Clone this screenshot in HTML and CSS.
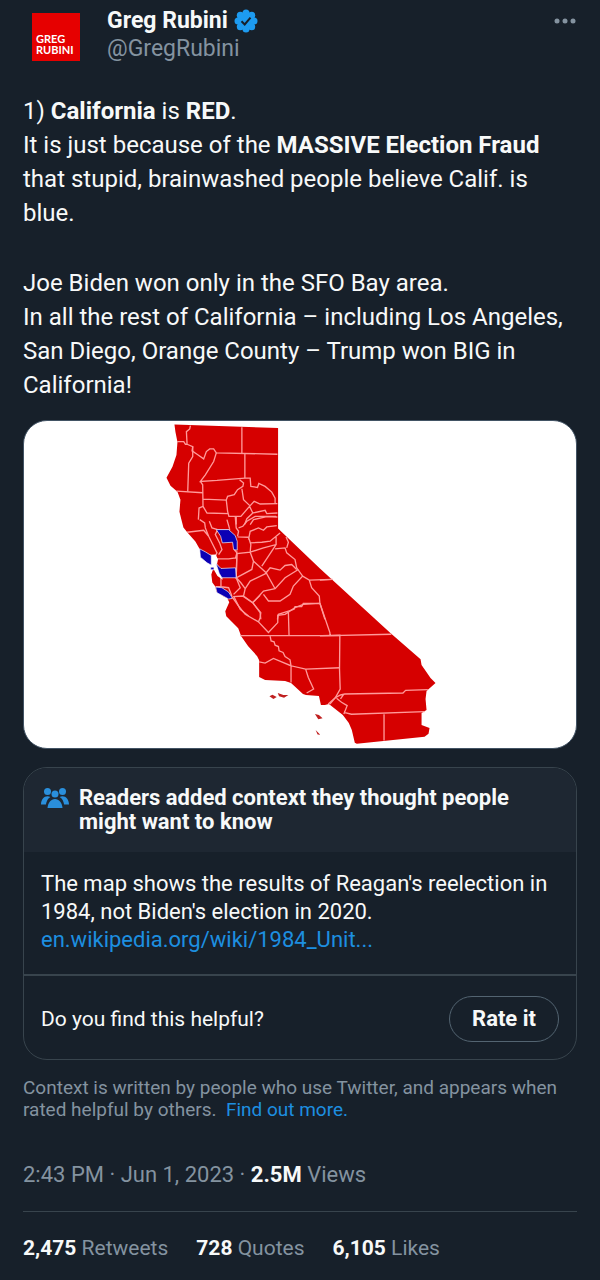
FILE: index.html
```html
<!DOCTYPE html>
<html lang="en">
<head>
  <meta charset="UTF-8">
  <meta name="viewport" content="width=device-width, initial-scale=1.0">
  <title>Greg Rubini on Twitter</title>
  <link rel="stylesheet" href="styles.css">
</head>
<body>

  <article class="tweet">
    <header class="author">
      <div class="avatar">GREG<br>RUBINI</div>
      <div class="names">
        <div class="name">
          Greg Rubini
          <svg class="verified" viewBox="0 0 24 24" aria-label="Verified">
            <g fill="#1d9bf0">
              <circle cx="12" cy="12" r="9"/>
              <circle cx="12" cy="4" r="3.5"/>
              <circle cx="17.700" cy="6.300" r="3.500"/>
              <circle cx="20" cy="12" r="3.500"/>
              <circle cx="17.700" cy="17.700" r="3.500"/>
              <circle cx="12" cy="20" r="3.500"/>
              <circle cx="6.300" cy="17.700" r="3.500"/>
              <circle cx="4" cy="12" r="3.500"/>
              <circle cx="6.300" cy="6.300" r="3.500"/>
            </g>
            <path d="M7.500 12.300l3.200 3.200 5.800-6.800" fill="none" stroke="#17202a" stroke-width="2"/>
          </svg>
        </div>
        <div class="handle">@GregRubini</div>
      </div>
      <button class="more" aria-label="More">
        <svg viewBox="0 0 24 8"><circle cx="4" cy="4" r="2.500"/><circle cx="12" cy="4" r="2.500"/><circle cx="20" cy="4" r="2.500"/></svg>
      </button>
    </header>

    <div class="text">
      <p>1) <b>California</b> is <b>RED</b>.<br>
      It is just because of the <b>MASSIVE Election Fraud</b><br>
      that stupid, brainwashed people believe Calif. is<br>
      blue.</p>
      <p>Joe Biden won only in the SFO Bay area.<br>
      In all the rest of California – including Los Angeles,<br>
      San Diego, Orange County – Trump won BIG in<br>
      California!</p>
    </div>

    <div class="media">
      <svg class="map" viewBox="0 0 1662 984" role="img" aria-label="County map of California">
        <!-- state outline -->
        <path class="state" transform="translate(-69 -1263) scale(3)" d="M174 424.500L278 428V529L320 569L391 634L421 660L422 666L431 679L436 684L427 692L426 700L427 711L422 714V726L430 729L429 735L425 738L357 745L355 744L352 731L349 724L343 716L329 705L325 706H321L319 697L306 696L303 695L291 684L285 682L265 681L259 678V661L257 657L248 647L241 637L238 629L232 623L226 617L225 612L229 603L227 599L223 597L216 592L215 587L212 583L211 575L213 569L211 564L199 549L195 542L187 533L183 528L181 520L179 512L180 500L177 492L170 486L166 478L172 467L176 455L177 442L175 432Z"/>
        <!-- north -->
        <g class="county" transform="translate(381 -18)">
          <path d="M80 80H100L105 88H110L108 50L118 42L120 32M110 88L127 95L125 108L140 118L160 132L168 110L178 102L190 102L198 114L382 118M275 37V115M284 117V190"/>
          <path d="M127 95V125L115 145L112 230M198 114L190 140L165 180L150 200L200 197L284 190H300L302 215L322 218L326 206L345 215L365 232L375 250V267"/>
          <path d="M78 229L157 234M150 200L157 210L158 275L146 280L144 315M158 253L228 256L232 245L252 240L262 225L278 215L280 205L268 195"/>
          <path d="M275 222L280 255L298 272M228 256L232 290L236 305H272L298 275L312 260L330 268L382 267M158 275L170 295L235 297M298 275L308 295L345 287L350 297L382 295M258 305V330M283 330L290 312L308 295M300 330L310 315L350 306L382 307"/>
        </g>
        <!-- sierra -->
        <g class="county" transform="translate(621 237)">
          <path d="M15 50L18 85L25 95L22 110M25 85L38 80L50 65L75 50H138M55 120L60 95L85 85L100 92L110 82L140 78M22 112L55 113L62 135L60 158L20 162L18 235L65 210L70 185L60 158"/>
          <path d="M60 130L95 128L120 125L150 100M60 158L100 145L138 135V112M138 135L95 200M70 185L108 220L135 268M135 148L165 145L170 160L195 180L200 205L218 230M168 112L175 128L170 145"/>
          <path d="M108 220L120 205L150 212L165 198L185 195L200 210M18 235L32 250L45 268L40 290L68 310L100 275L135 268L165 235L205 210M45 268L60 245L108 222M68 310L90 340L92 360"/>
          <path d="M100 285L115 305H150L180 285L190 260L218 230L238 242L305 240M238 242L245 265L268 290L270 312L285 360M270 312H220L215 322H195L192 330L145 345L142 360M10 290L30 330L55 350"/>
        </g>
        <!-- bay area -->
        <g class="county" transform="translate(411 237)">
          <path d="M80 98L130 92L145 110L160 140L170 160L165 170M118 60L133 70L135 85L145 110M147 65L155 85L172 90H210M172 90L165 105L178 130L185 150L175 165M200 60L208 88M222 150L230 160L226 175L205 178H165M230 155L228 235L240 265L220 285M182 235V262H166M182 262L205 265L215 290"/>
          <path class="bay" d="M150 168L165 167L171 180L168 195L175 205L184 236L173 228L160 205L150 197Z"/>
          <path class="blue" d="M168 90H205L225 108L231 125V152L220 150L217 128L186 130L181 110Z"/>
          <path class="blue" d="M118 148L135 157L153 168V197L140 190L120 173Z"/>
          <path class="blue" d="M167 192L182 207L226 205L228 235H185L177 222Z"/>
          <path class="blue" d="M166 263L185 265L205 278L217 297L205 299L185 288L170 280Z"/>
          <path class="blue" d="M151 203H161V211H151Z"/>
        </g>
        <!-- central and south coast -->
        <g class="county" transform="translate(576 507)">
          <path d="M75 139H320L375 138L374 240L376 300L362 325L345 345M50 22L70 50L90 75L130 98M55 22L82 20L112 40L137 70L135 85L130 98L160 130L188 100V78L210 75L240 55L265 45L315 42M220 68L222 138M315 42L345 130L346 140M112 40L135 18"/>
          <path d="M165 141L168 155L177 158L180 168L190 172L192 185L204 190L210 202L225 212L228 230L272 240L375 236M132 218L150 222L175 208L228 230V280M272 240L280 265L296 300L275 312"/>
          <path class="island" d="M163 322L172 317L185 324L175 330ZM188 312L205 318L220 318L207 326L192 322ZM300 375L312 378L323 388L310 391ZM302 423L316 438L308 437Z"/>
        </g>
        <!-- desert and border -->
        <g class="county" transform="translate(891 417)">
          <path d="M0 230L215 225M0 62L38 60M48 415L62 408L75 405L250 402L258 394L325 392M48 415L25 435M50 418L65 430L82 440L72 465M72 460L95 466L315 458M193 466V545M62 420L72 405"/>
        </g>
      </svg>
    </div>

    <section class="note">
      <div class="note-head">
        <svg class="people" viewBox="0 0 28 22" aria-hidden="true">
          <circle cx="6.500" cy="4.500" r="3.500"/>
          <circle cx="21.500" cy="4.500" r="3.500"/>
          <circle cx="14" cy="7" r="3.500"/>
          <path d="M0 17.500C0 12.500 3 9.200 6.500 9.200c1 0 2 .2 2.900.8-2.500 1.500-4 4.200-4.500 7.500Z"/>
          <path d="M28 17.500c0-5-3-8.300-6.500-8.300-1 0-2 .2-2.900.8 2.500 1.500 4 4.200 4.500 7.500Z"/>
          <path d="M6.500 21c.5-5.500 3.500-9 7.500-9s7 3.500 7.500 9Z"/>
        </svg>
        <h2>Readers added context they thought people<br>might want to know</h2>
      </div>
      <div class="note-body">
        The map shows the results of Reagan's reelection in<br>
        1984, not Biden's election in 2020.<br>
        <a href="#">en.wikipedia.org/wiki/1984_Unit...</a>
      </div>
      <div class="note-rate">
        <span>Do you find this helpful?</span>
        <button class="rate">Rate it</button>
      </div>
    </section>

    <p class="about">Context is written by people who use Twitter, and appears when<br>
    rated helpful by others.&nbsp; <a href="#">Find out more.</a></p>

    <div class="meta">2:43 PM · Jun 1, 2023 · <b>2.5M</b> Views</div>

    <footer class="stats">
      <span><b>2,475</b> Retweets</span>
      <span><b>728</b> Quotes</span>
      <span><b>6,105</b> Likes</span>
    </footer>
  </article>

</body>
</html>
```
FILE: styles.css
```css
* {
  box-sizing: border-box;
}

body {
  margin: 0;
  background: #17202a;
  color: #f7f9f9;
  font-family: Roboto, sans-serif;
}

a {
  color: #1d8fe0;
  text-decoration: none;
}

button {
  background: none;
  color: inherit;
  font-family: inherit;
  cursor: pointer;
}

.tweet {
  padding: 7px 23px 16px;
}

.author {
  display: flex;
  align-items: flex-start;
}

.avatar {
  width: 48px;
  height: 48px;
  margin: 6px 27px 0 9px;
  padding: 20px 0 0 4px;
  background: #e60000;
  color: white;
  font-family: Lato, sans-serif;
  font-size: 11px;
  font-weight: bold;
  line-height: 11px;
}

.names {
  flex: 1;
  font-size: 23px;
  line-height: 28px;
}

.name {
  display: flex;
  align-items: center;
  gap: 6px;
  font-weight: bold;
}

.verified {
  width: 24px;
  height: 24px;
}

.handle {
  color: #8493a0;
}

.more {
  margin-top: 10px;
  padding: 0;
  border: none;
}

.more svg {
  display: block;
  width: 24px;
  height: 8px;
  fill: #8493a0;
}

.text {
  margin-top: 31px;
  font-size: 24px;
  line-height: 34px;
}

.text p {
  margin: 0 0 36px;
}

.text p:last-child {
  margin-bottom: 18px;
}

.media {
  overflow: hidden;
  background: white;
  border: 1px solid #425364;
  border-radius: 24px;
}

.map {
  display: block;
  width: 100%;
}

.state {
  fill: #d60000;
}

.county {
  fill: none;
  stroke: #ff9a9a;
  stroke-width: 4;
}

.bay {
  fill: white;
  stroke: white;
}

.blue {
  fill: #0c00b4;
  stroke: white;
  stroke-width: 2;
}

.island {
  fill: #c02020;
  stroke: none;
}

.note {
  margin-top: 18px;
  overflow: hidden;
  border: 1px solid #38444d;
  border-radius: 24px;
}

.note-head {
  display: flex;
  gap: 10px;
  padding: 18px 17px;
  background: #1e2732;
}

.people {
  flex-shrink: 0;
  width: 28px;
  height: 24px;
  fill: #2a8fdc;
}

.note h2 {
  margin: 0;
  font-size: 22px;
  line-height: 24px;
}

.note-body {
  padding: 18px 17px 20px;
  font-size: 22px;
  line-height: 28px;
}

.note-rate {
  display: flex;
  align-items: center;
  justify-content: space-between;
  padding: 20px 17px 17px;
  border-top: 2px solid #38444d;
  font-size: 21px;
}

.rate {
  height: 46px;
  padding: 0 22px;
  border: 1px solid #536471;
  border-radius: 23px;
  font-size: 22px;
  font-weight: bold;
}

.about {
  margin: 17px 0 0;
  color: #8493a0;
  font-size: 19px;
  line-height: 22px;
}

.meta {
  padding: 40px 0 22px;
  border-bottom: 1px solid #38444d;
  color: #8493a0;
  font-size: 22px;
  line-height: 28px;
}

.stats {
  display: flex;
  gap: 28px;
  padding-top: 22px;
  color: #8493a0;
  font-size: 21px;
  line-height: 28px;
}

b {
  color: #f7f9f9;
}
```
